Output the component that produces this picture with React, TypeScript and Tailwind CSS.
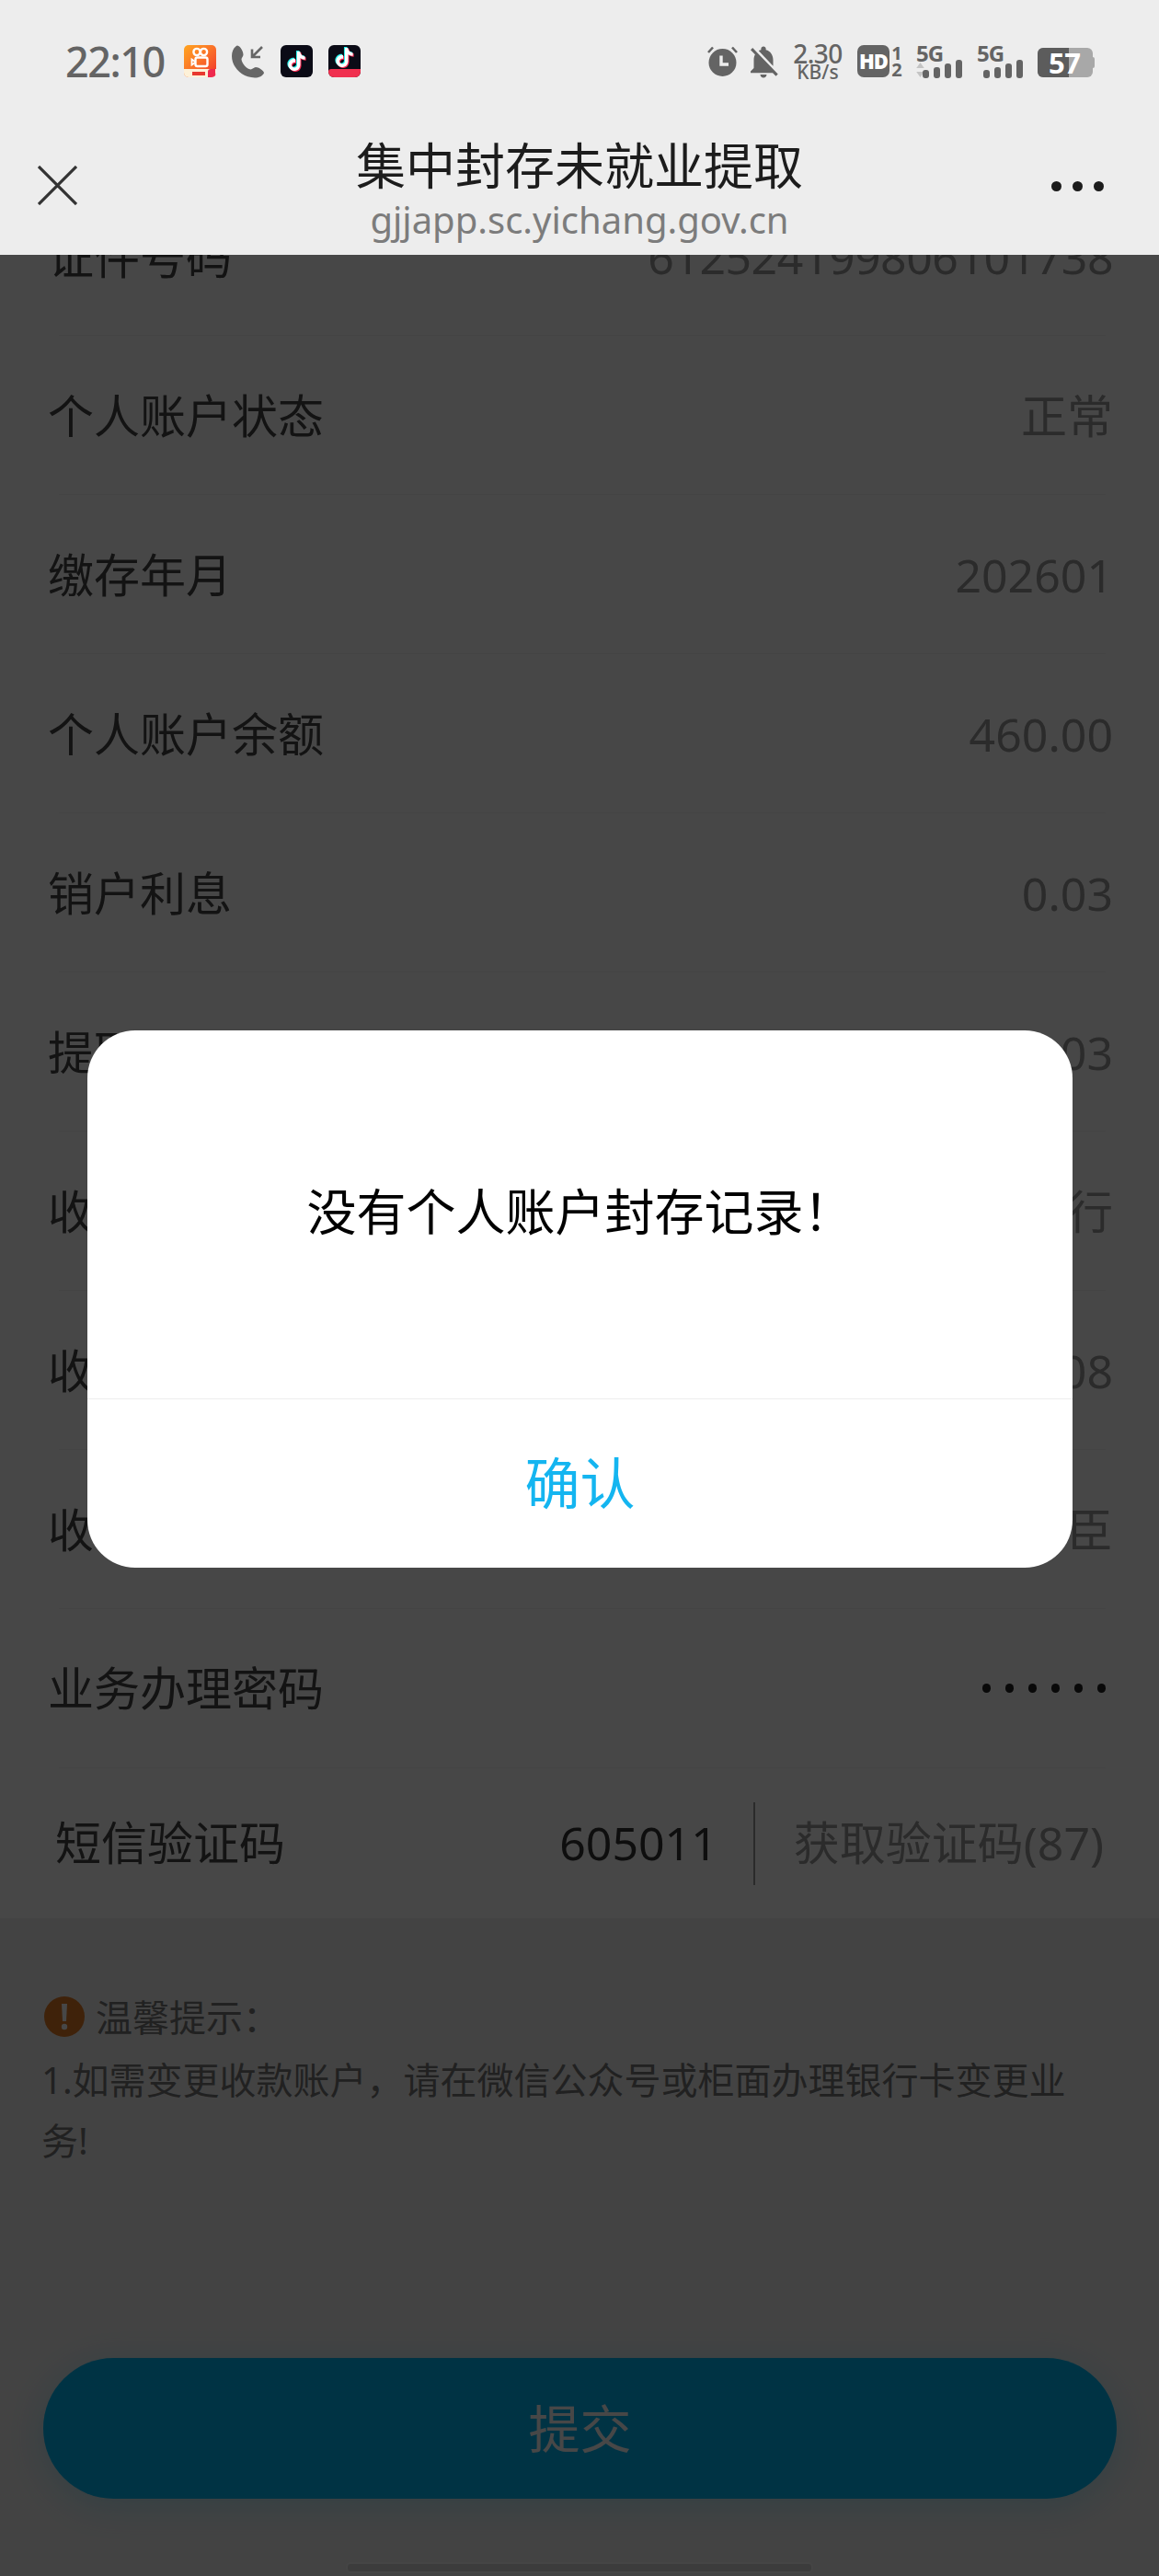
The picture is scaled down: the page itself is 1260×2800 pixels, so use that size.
import { SiTiktok } from "react-icons/si";
import { MdNotificationsOff } from "react-icons/md";

const FONT = "font-['Noto_Sans','Noto_Sans_CJK_SC',sans-serif]";

const rows: { label: string; value: string }[] = [
  { label: "证件号码", value: "612524199806101738" },
  { label: "个人账户状态", value: "正常" },
  { label: "缴存年月", value: "202601" },
  { label: "个人账户余额", value: "460.00" },
  { label: "销户利息", value: "0.03" },
  { label: "提取金额", value: "0.03" },
  { label: "收款银行", value: "行" },
  { label: "收款账号", value: "08" },
  { label: "收款户名", value: "臣" },
];

function Separator() {
  return <div className="ml-[64px] mr-[58px] h-px bg-[#f4f4f4]" />;
}

function TikTokBadge({ ribbon }: { ribbon?: boolean }) {
  return (
    <div className="relative w-[35px] h-[35px] rounded-[6px] bg-[#0b0b16] overflow-hidden flex-none">
      <div className={`absolute left-[7px] ${ribbon ? "top-[3px]" : "top-[7px]"} w-[21px] h-[21px]`}>
        <SiTiktok className="absolute left-[-1px] top-[-1px] text-[#25f4ee]" size={21} />
        <SiTiktok className="absolute left-[1px] top-[1px] text-[#fe2c55]" size={21} />
        <SiTiktok className="absolute left-0 top-0 text-white" size={21} />
      </div>
      {ribbon && (
        <div className="absolute left-0 bottom-0 w-full h-[9px] bg-[#f0304f] rounded-tl-[3px]" />
      )}
    </div>
  );
}

function CameraBadge() {
  return (
    <div className="relative w-[35px] h-[35px] rounded-[5px] bg-gradient-to-br from-[#ffa51f] to-[#f0252c] overflow-hidden flex-none">
      <svg viewBox="0 0 35 35" className="absolute inset-0 w-[35px] h-[35px]" fill="none" stroke="#fff" strokeWidth="2.4">
        <circle cx="14" cy="7.5" r="3.6" />
        <circle cx="21.5" cy="7.5" r="3.6" />
        <rect x="12.5" y="13.5" width="13" height="9.5" rx="2" />
        <path d="M12 18 L8.5 15.5 V21.5 L12 19" strokeWidth="1.8" />
      </svg>
      <div className="absolute left-0 bottom-0 w-full h-[9px] bg-[#fdf1d8]" />
      <div className="absolute left-[9px] bottom-[2px] w-[14px] h-[4px] bg-[#e8392f]" />
      <div className="absolute right-[1px] bottom-0 w-[8px] h-[9px] bg-[#ee2a4e] rounded-tl-[3px]" />
    </div>
  );
}

function IncomingCall() {
  return (
    <svg viewBox="0 0 35 36" className="w-[35px] h-[36px] flex-none">
      <path
        d="M6 0.5 C2.5 2 0 6.5 0 12 C0 24 11 35.5 25 35.5 C29.5 35.5 33.5 33.5 35 30.5 C35 27.5 29 24 26 24 C24 24 22.5 26.5 20.5 26.5 C16 26 11 20 10.5 15.5 C10.5 13.5 12.5 12.5 12.5 10.5 C12.5 7 9.5 1 6 0.5 Z"
        fill="#666"
      />
      <path d="M33 2 L22.5 12.5 M22 4.5 V13 H31" fill="none" stroke="#666" strokeWidth="2.6" />
    </svg>
  );
}

function AlarmClock() {
  return (
    <svg viewBox="0 0 33 34" className="w-[33px] h-[34px] flex-none">
      <circle cx="16.5" cy="19" r="15" fill="#646464" />
      <path d="M1 8 L6 2.5 M32 8 L27 2.5" stroke="#646464" strokeWidth="2.6" fill="none" />
      <path d="M15 11.5 V21 H23" stroke="#ededed" strokeWidth="3.4" fill="none" />
    </svg>
  );
}

function SignalBars({ arrows }: { arrows?: boolean }) {
  const heights = [9, 12, 16, 20];
  return (
    <div className="relative w-[50px] h-[36px] flex-none">
      <div className="absolute left-0 top-[-1px] text-[24px] leading-[20px] font-bold text-[#646464] tracking-[-1px]">5G</div>
      {arrows && (
        <svg viewBox="0 0 9 19" className="absolute left-0 bottom-0 w-[9px] h-[18px]">
          <path d="M4.5 1 L9 7.5 H0 Z M4.5 18 L9 11.5 H0 Z" fill="#c4c4c4" />
        </svg>
      )}
      <div className="absolute right-0 bottom-0 flex items-end gap-[5px]">
        {heights.map((h, i) => (
          <div key={i} className="w-[7px] rounded-[3px] bg-[#646464]" style={{ height: h }} />
        ))}
      </div>
    </div>
  );
}

function Battery() {
  return (
    <div className="relative w-[62px] h-[32px] mt-[3px] flex-none ml-[16px]">
      <div className="absolute left-0 top-0 w-[60px] h-[32px] rounded-[6px] bg-[#a8a8a8] overflow-hidden">
        <div className="h-full w-[34px] bg-[#5c5c5c]" />
      </div>
      <div className="absolute right-0 top-[10px] w-[3px] h-[12px] rounded-r-[2px] bg-[#a8a8a8]" />
      <div className="absolute left-[12px] top-0 h-[32px] leading-[33px] text-[31px] font-bold text-white tracking-[-0.5px]">57</div>
    </div>
  );
}

function StatusBar() {
  return (
    <div className="h-[132px] flex items-start pt-[49px] pl-[71px] pr-[70px]">
      <div className="text-[45px] leading-[36px] font-medium text-[#646464] w-[129px] flex-none tracking-[-1.5px]">22:10</div>
      <CameraBadge />
      <div className="ml-[17px]"><IncomingCall /></div>
      <div className="ml-[18px]"><TikTokBadge /></div>
      <div className="ml-[17px]"><TikTokBadge ribbon /></div>
      <div className="flex-1" />
      <AlarmClock />
      <MdNotificationsOff className="ml-[7px] -mt-[3px] text-[#646464] flex-none" size={42} />
      <div className="ml-[9px] w-[58px] flex-none text-[#646464] text-center -mt-[2px]">
        <div className="text-[28px] leading-[22px] font-medium tracking-[-0.5px]">2.30</div>
        <div className="text-[21px] leading-[18px] font-medium">KB/s</div>
      </div>
      <div className="ml-[14px] w-[35px] h-[35px] rounded-[7px] bg-[#646464] text-white text-[22px] leading-[35px] font-black text-center flex-none tracking-[-1px]">HD</div>
      <div className="ml-[2px] w-[12px] flex-none text-[#646464] text-[20px] leading-[18px] font-bold text-center">
        <div>1</div>
        <div>2</div>
      </div>
      <div className="ml-[15px]"><SignalBars arrows /></div>
      <div className="ml-[16px]"><SignalBars /></div>
      <Battery />
    </div>
  );
}

function NavBar() {
  return (
    <div className="h-[145px] grid grid-cols-[1fr_auto_1fr]">
      <div className="pl-[41px] pt-[48px]">
        <svg viewBox="0 0 43 43" className="w-[43px] h-[43px]" stroke="#333" strokeWidth="3.2" fill="none">
          <path d="M1 1 L42 42 M42 1 L1 42" />
        </svg>
      </div>
      <div className="text-center">
        <div className="text-[54px] leading-[68px] mt-[14px] text-[#1c1c1c]">集中封存未就业提取</div>
        <div className="text-[40px] leading-[46px] mt-[2px] text-[#7c7c7c]">gjjapp.sc.yichang.gov.cn</div>
      </div>
      <div className="flex justify-end items-start gap-[12px] pr-[60px] pt-[65px]">
        <span className="w-[11px] h-[11px] rounded-full bg-[#1c1c1c]" />
        <span className="w-[11px] h-[11px] rounded-full bg-[#1c1c1c]" />
        <span className="w-[11px] h-[11px] rounded-full bg-[#1c1c1c]" />
      </div>
    </div>
  );
}

function InfoRow({ label, value, first }: { label: string; value: string; first?: boolean }) {
  return (
    <div className={`h-[172px] flex items-center justify-between pt-[2px] pl-[52px] pr-[50px] text-[50px] ${first ? "-mt-[85px]" : ""}`}>
      <span className="text-[#444]">{label}</span>
      <span className={`text-[#999] ${first ? "tracking-[-0.5px]" : ""}`}>{value}</span>
    </div>
  );
}

function AlertDialog() {
  return (
    <div className="absolute left-[95px] top-[843px] w-[1071px] h-[584px] bg-white rounded-[52px] overflow-hidden flex flex-col">
      <div className="h-[400px] flex items-center justify-center pb-[6px] text-[54px] text-black">
        没有个人账户封存记录！
      </div>
      <div className="h-px bg-[#eeeeee]" />
      <div className="flex-1 flex items-center justify-center pb-[2px] text-[60px] text-[#14b5f0]">确认</div>
    </div>
  );
}

export default function App() {
  return (
    <div className={`w-[1260px] h-[2800px] overflow-hidden flex flex-col bg-[#ededed] ${FONT}`}>
      <header className="h-[277px] flex-none">
        <StatusBar />
        <NavBar />
      </header>

      <main className="relative flex-1 overflow-hidden bg-[#f0f0f0]">
        <section className="bg-white">
          {rows.map((r, i) => (
            <div key={r.label}>
              <InfoRow label={r.label} value={r.value} first={i === 0} />
              <Separator />
            </div>
          ))}

          <div className="h-[172px] flex items-center justify-between pl-[52px] pr-[50px] text-[50px]">
            <span className="text-[#444]">业务办理密码</span>
            <div className="flex gap-[16px] pr-[8px]">
              {[0, 1, 2, 3, 4, 5].map((d) => (
                <span key={d} className="w-[9px] h-[10px] rounded-full bg-[#222]" />
              ))}
            </div>
          </div>
          <Separator />

          <div className="h-[163px] flex items-center pl-[60px] pr-[60px] pt-[2px] text-[50px]">
            <span className="text-[#444] flex-1 -mt-[2px]">短信验证码</span>
            <span className="text-[#333] -mt-[2px]">605011</span>
            <div className="ml-[39px] mr-[42px] w-[2px] h-[90px] -mt-[2px] bg-[#999]" />
            <span className="text-[#999] -mt-[2px]">获取验证码(87)</span>
          </div>
        </section>

        <section className="pt-[85px] pl-[45px] pr-[90px] text-[40px] text-[#777]">
          <div className="h-[44px] flex items-center">
            <svg viewBox="0 0 44 44" className="w-[44px] h-[44px] ml-[3px] flex-none">
              <circle cx="22" cy="22" r="22" fill="#e07a24" />
              <path d="M19 8 H25 L24 27 H20 Z" fill="#fff" />
              <circle cx="22" cy="33" r="3.2" fill="#fff" />
            </svg>
            <span className="ml-[12px] pt-[2px]">温馨提示：</span>
          </div>
          <p className="mt-[14px] leading-[66px]">1.如需变更收款账户，请在微信公众号或柜面办理银行卡变更业务!</p>
        </section>

        <button className="block ml-[47px] mt-[203px] w-[1167px] h-[153px] rounded-full bg-[#00b8f5] pb-[2px] text-[56px] text-white shadow-[0_8px_40px_rgba(0,184,245,0.25)]">
          提交
        </button>

        <div className="mx-auto mt-[69px] w-[508px] h-[12px] rounded-[5px] bg-[#d8d8d8] border-2 border-[#f6f6f6]" />

        <div className="absolute inset-0 bg-[rgba(0,0,0,0.72)]" />
        <AlertDialog />
      </main>
    </div>
  );
}
